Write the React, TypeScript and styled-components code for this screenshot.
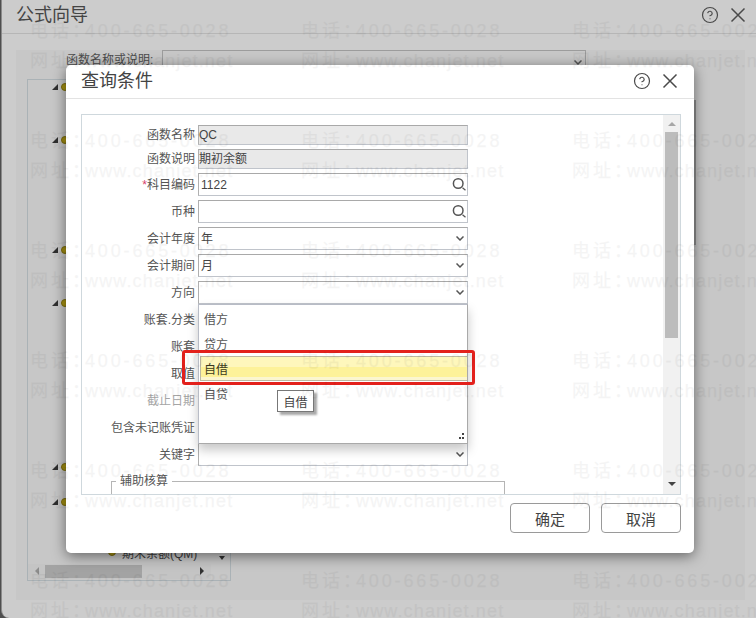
import React from "react";
import styled, { createGlobalStyle } from "styled-components";
import { CircleHelp } from "lucide-react";

const Global = createGlobalStyle`
  html, body { margin: 0; padding: 0; background: #cbcbcb; }
  * { box-sizing: border-box; }
`;
const FONT = `"Liberation Sans", "Noto Sans CJK SC", sans-serif`;

const Page = styled.div`
  position: relative; width: 756px; height: 618px; overflow: hidden;
  background: #4e4e4e; font-family: ${FONT}; font-size: 12px; color: #555;
`;
const OuterDialog = styled.div`
  width: 756px; height: 618px; margin-left: 1px; background: #cccccc;
  border-bottom-left-radius: 8px; border-left: 1px solid #8a8a8a;
`;
const Header = styled.div<{ $modal?: boolean }>`
  height: 34px; display: flex; align-items: center;
  padding: 0 ${p => (p.$modal ? "15px" : "10px")} ${p => (p.$modal ? "2px" : "4px")} ${p => (p.$modal ? "15px" : "14px")};
  border-bottom: 1px solid ${p => (p.$modal ? "#e3e3e3" : "#b6b6b6")};
  font-size: 18px; color: #444;
`;
const HeaderTitle = styled.div` flex: 1; line-height: 24px; `;
const HeaderIcons = styled.div` display: flex; align-items: center; gap: 10px; color: #4a4a4a; `;
const CloseIcon = () => (
  <svg width="18" height="18" viewBox="0 0 18 18" fill="none" stroke="currentColor" strokeWidth="1.5">
    <path d="M2.5 2.5 L15.5 15.5 M15.5 2.5 L2.5 15.5" />
  </svg>
);
const OuterBody = styled.div`
  width: 729px; height: 550px; margin: 16px 0 0 14px; background: #c7c7c7;
`;
const SearchRow = styled.div`
  display: flex; height: 29px; align-items: flex-start; padding-left: 50px; color: #4d4d4d;
`;
const SearchLabel = styled.div` width: 96px; padding-top: 2px; line-height: 16px; white-space: nowrap; `;
const SearchBox = styled.div`
  width: 424px; height: 24px; border: 1px solid #9c9c9c; display: flex; justify-content: flex-end; align-items: center; padding-right: 3px;
`;
const TreePanel = styled.div`
  width: 204px; height: 502px; margin-left: 11px; border: 1px solid #aab2b6; display: flex; flex-direction: column;
`;
const TreeList = styled.div` flex: 1; min-height: 0; position: relative; `;
const TreeRow = styled.div<{ $gap: number; $indent: number; $wide?: boolean }>`
  height: 14px; margin-top: ${p => p.$gap}px; padding-left: ${p => p.$indent}px;
  display: flex; align-items: center; gap: ${p => (p.$wide ? 6 : 3)}px; color: #3d3d3d;
`;
const Dot = styled.span`
  width: 8px; height: 8px; border-radius: 50%; background: #a89312; border: 1px solid #7a6c10;
`;
const Arrow = () => (
  <svg width="6" height="6" viewBox="0 0 6 6"><polygon points="6,0 6,6 0,6" fill="#2f2f2f" /></svg>
);
const TreeEndArrow = styled.div`
  position: absolute; right: 5px; bottom: 4px; width: 0; height: 0;
  border-left: 3px solid transparent; border-right: 3px solid transparent; border-top: 4px solid #333;
`;
const HScroll = styled.div`
  height: 15px; margin-bottom: 1px; display: flex; align-items: center; background: #c4c4c4; width: 183px; position: relative;
`;
const HThumb = styled.div` width: 97px; height: 13px; margin-left: 17px; background: #a3a3a3; `;
const TriLeft = styled.div`
  position: absolute; left: 7px; top: 3px; width: 0; height: 0;
  border-top: 4px solid transparent; border-bottom: 4px solid transparent; border-right: 4px solid #8d8d8d;
`;
const TriRight = styled.div`
  position: absolute; right: 7px; top: 3px; width: 0; height: 0;
  border-top: 4px solid transparent; border-bottom: 4px solid transparent; border-left: 4px solid #333;
`;

const Modal = styled.div`
  position: absolute; left: 66px; top: 65px; width: 628px; height: 488px;
  background: #fff; border-radius: 5px; box-shadow: 0 3px 14px rgba(0,0,0,.5);
`;
const EdgeLine = styled.div`
  position: absolute; right: -2px; top: 35px; width: 2px; height: 145px; background: #6f6f6f;
`;
const ModalBody = styled.div` padding: 15px 13px 0 15px; `;
const FormPanel = styled.div`
  width: 600px; height: 381px; border: 1px solid #cfd8dd; display: flex; overflow: hidden;
`;
const FormArea = styled.div` flex: 1; min-width: 0; padding-top: 10px; `;
const Row = styled.div`
  position: relative; display: flex; align-items: center; gap: 3px; margin-bottom: 4px;
`;
const Label = styled.div<{ $muted?: boolean }>`
  width: 113px; text-align: right; white-space: nowrap; line-height: 16px;
  color: ${p => (p.$muted ? "#a5a5a5" : "#555")};
`;
const Star = styled.span` color: #d8416a; `;
const Field = styled.div<{ $disabled?: boolean }>`
  width: 270px; height: ${p => (p.$disabled ? 20 : 23)}px;
  display: flex; align-items: center; justify-content: space-between;
  padding: 0 3px 0 ${p => (p.$disabled ? "0" : "2px")};
  background: ${p => (p.$disabled ? "#e9e9e9" : "#fff")};
  border: 1px solid #c0c4cb; border-top: 1px solid #a9a9a9; border-left-color: #b0b0b0;
  color: #444; line-height: 16px;
`;
const Chevron = () => (
  <svg width="8" height="5" viewBox="0 0 8 5" fill="none" stroke="#555" strokeWidth="1.5"><path d="M0.5 0.5 L4 4 L7.5 0.5" /></svg>
);
const SearchGlyph = styled.svg` margin-right: -3px; `;
const SearchIcon = () => (
  <SearchGlyph width="15" height="15" viewBox="0 0 15 15" fill="none" stroke="#555">
    <circle cx="6.2" cy="6.5" r="4.8" strokeWidth="1.5" />
    <path d="M10.5 10.8 L13.5 13.2" strokeWidth="1.3" />
  </SearchGlyph>
);
const Dropdown = styled.div`
  position: absolute; left: 116px; top: 23px; width: 270px; height: 140px; z-index: 3;
  background: #fff; border: 1px solid #a9a9a9; border-top-color: #b8bcc6; border-left-color: #b8bcc6; padding-top: 1px;
  box-shadow: 0 6px 10px rgba(0,0,0,.22);
`;
const Item = styled.div<{ $active?: boolean }>`
  height: 25px; margin-left: 1px; padding-left: 3px; display: flex; align-items: center; color: #555;
  border: 1px solid ${p => (p.$active ? "#bdb9a2" : "transparent")};
  ${p => p.$active && `background: linear-gradient(#fef7bc 0 42%, #fdf299 42% 88%, #fbf6cf 88%); color: #3b3b20;`}
  ${p => p.$active && `border-right: 0;`}
`;
const Tip = styled.div`
  position: absolute; left: 78px; top: 85px; width: 37px; height: 22px; background: #fff;
  border: 1px solid #777; box-shadow: 3px 3px 2px #a9a9a9; display: flex; align-items: center; justify-content: center; color: #444;
`;
const Grip = styled.svg` position: absolute; right: 1px; bottom: 1px; `;
const RedBox = styled.div`
  position: absolute; left: -17px; top: 45px; width: 293px; height: 35px;
  border: 3px solid #e3211c; border-radius: 3px; pointer-events: none;
`;
const FieldSet = styled.div`
  position: relative; width: 394px; height: 80px; margin: 15px 0 0 29px; border: 1px solid #b5b5b5;
`;
const Legend = styled.div`
  position: absolute; left: 4px; top: -8px; padding: 0 4px; background: #fff; line-height: 14px; color: #555;
`;
const ScrollCol = styled.div`
  width: 17px; background: #f1f1f1; display: flex; flex-direction: column; align-items: center; position: relative;
`;
const ThumbV = styled.div` width: 13px; height: 206px; margin-top: 17px; background: #bcbcbc; `;
const UpTri = styled.div`
  position: absolute; top: 7px; left: 5px; width: 0; height: 0;
  border-left: 4px solid transparent; border-right: 4px solid transparent; border-bottom: 4px solid #a7a7a7;
`;
const DownTri = styled.div`
  position: absolute; bottom: 8px; left: 5px; width: 0; height: 0;
  border-left: 4px solid transparent; border-right: 4px solid transparent; border-top: 4px solid #444;
`;
const Footer = styled.div` display: flex; justify-content: flex-end; gap: 11px; margin-top: 8px; `;
const Button = styled.button`
  width: 80px; height: 30px; background: #fff; border: 1px solid #9a9a9a; border-radius: 4px;
  font: 15px ${FONT}; color: #444; padding: 0;
`;

const Watermark = styled.div`
  position: absolute; inset: 0; pointer-events: none; z-index: 9; padding: 16px 0 0 30px;
  display: grid; grid-template-columns: repeat(3, 271px); grid-auto-rows: 110px;
  color: #000; opacity: .04; font-size: 18px; overflow: hidden;
  -webkit-text-stroke: 0.25px #000;
`;
const Tile = styled.div` line-height: 30px; white-space: nowrap; `;
const Line = styled.div` display: flex; `;
const WmLead = styled.span` width: 55px; letter-spacing: 3px; `;
const WmColon = styled.span` letter-spacing: -5px; `;
const WmText = styled.span<{ $ls: number }>` letter-spacing: ${p => p.$ls}px; `;

const fields: { label: string; req?: boolean; disabled?: boolean; value?: string; kind?: "search" | "select" }[] = [
  { label: "函数名称", disabled: true, value: "QC" },
  { label: "函数说明", disabled: true, value: "期初余额" },
  { label: "科目编码", req: true, value: "1122", kind: "search" },
  { label: "币种", kind: "search" },
  { label: "会计年度", value: "年", kind: "select" },
  { label: "会计期间", value: "月", kind: "select" },
];
const hidden: { label: string; muted?: boolean; chev?: boolean }[] = [
  { label: "账套.分类" }, { label: "账套" }, { label: "取值" },
  { label: "截止日期", muted: true }, { label: "包含未记账凭证" }, { label: "关键字", chev: true },
];
const tree = [0, 39, 96, 39, 150, 21];
const options = ["借方", "贷方", "自借", "自贷"];

export default function App() {
  return (
    <Page>
      <Global />
      <OuterDialog>
        <Header>
          <HeaderTitle>公式向导</HeaderTitle>
          <HeaderIcons>
            <CircleHelp size={18} strokeWidth={1.6} />
            <CloseIcon />
          </HeaderIcons>
        </Header>
        <OuterBody>
          <SearchRow>
            <SearchLabel>函数名称或说明:</SearchLabel>
            <SearchBox><Chevron /></SearchBox>
          </SearchRow>
          <TreePanel>
            <TreeList>
              {tree.map((gap, i) => (
                <TreeRow key={i} $gap={gap} $indent={24}>
                  <Arrow /><Dot />
                </TreeRow>
              ))}
              <TreeRow $gap={36} $indent={80} $wide><Dot />期末余额(QM)</TreeRow>
              <TreeEndArrow />
            </TreeList>
            <HScroll><TriLeft /><HThumb /><TriRight /></HScroll>
          </TreePanel>
        </OuterBody>
      </OuterDialog>

      <Modal>
        <EdgeLine />
        <Header $modal>
          <HeaderTitle>查询条件</HeaderTitle>
          <HeaderIcons>
            <CircleHelp size={18} strokeWidth={1.6} />
            <CloseIcon />
          </HeaderIcons>
        </Header>
        <ModalBody>
          <FormPanel>
            <FormArea>
              {fields.map(f => (
                <Row key={f.label}>
                  <Label>{f.req && <Star>*</Star>}{f.label}</Label>
                  <Field $disabled={f.disabled}>
                    <span>{f.value}</span>
                    {f.kind === "search" && <SearchIcon />}
                    {f.kind === "select" && <Chevron />}
                  </Field>
                </Row>
              ))}
              <Row>
                <Label>方向</Label>
                <Field><span /><Chevron /></Field>
                <Dropdown>
                  {options.map(o => <Item key={o} $active={o === "自借"}>{o}</Item>)}
                  <Tip>自借</Tip>
                  <Grip width="9" height="9" viewBox="0 0 9 9" fill="#444">
                    <rect x="5" y="0" width="2" height="2" /><rect x="2" y="4" width="2" height="2" />
                    <rect x="5" y="4" width="2" height="2" />
                  </Grip>
                  <RedBox />
                </Dropdown>
              </Row>
              {hidden.map(h => (
                <Row key={h.label}>
                  <Label $muted={h.muted}>{h.label}</Label>
                  <Field><span />{h.chev && <Chevron />}</Field>
                </Row>
              ))}
              <FieldSet><Legend>辅助核算</Legend></FieldSet>
            </FormArea>
            <ScrollCol><UpTri /><ThumbV /><DownTri /></ScrollCol>
          </FormPanel>
          <Footer>
            <Button>确定</Button>
            <Button>取消</Button>
          </Footer>
        </ModalBody>
      </Modal>

      <Watermark>
        {Array.from({ length: 18 }).map((_, i) => (
          <Tile key={i}>
            <Line><WmLead>电话<WmColon>：</WmColon></WmLead><WmText $ls={2.85}>400-665-0028</WmText></Line>
            <Line><WmLead>网址<WmColon>：</WmColon></WmLead><WmText $ls={1.15}>www.chanjet.net</WmText></Line>
          </Tile>
        ))}
      </Watermark>
    </Page>
  );
}
